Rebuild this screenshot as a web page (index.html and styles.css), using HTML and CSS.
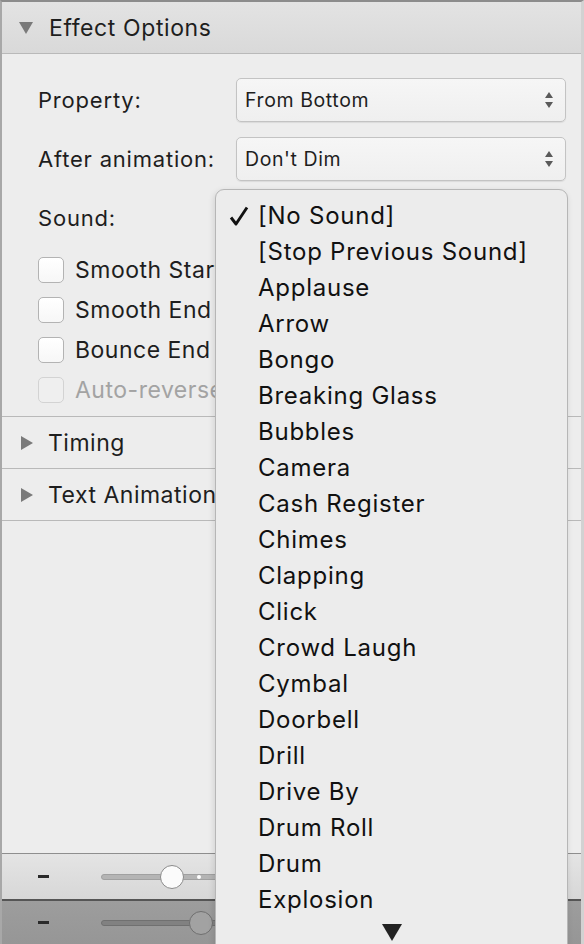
FILE: index.html
```html
<!DOCTYPE html>
<html>
<head>
<meta charset="utf-8">
<link rel="stylesheet" href="styles.css">
</head>
<body>
<div class="panel">
  <div class="section-head open">
    <svg class="tri" width="14" height="12" viewBox="0 0 14 12"><path d="M0 0H14L7 12Z" fill="#7a7a7a"/></svg>
    <span>Effect Options</span>
  </div>
  <div class="options">
    <div class="row">
      <span class="label">Property:</span>
      <div class="select"><span>From Bottom</span>
        <svg class="arrows" width="10" height="20" viewBox="0 0 10 20"><path d="M5 2L9 8H1Z M1 12H9L5 18Z" fill="#5a5a5a"/></svg>
      </div>
    </div>
    <div class="row">
      <span class="label">After animation:</span>
      <div class="select"><span>Don't Dim</span>
        <svg class="arrows" width="10" height="20" viewBox="0 0 10 20"><path d="M5 2L9 8H1Z M1 12H9L5 18Z" fill="#5a5a5a"/></svg>
      </div>
    </div>
    <div class="row sound">
      <span class="label">Sound:</span>
    </div>
    <div class="checks">
      <label class="check"><span class="box"></span>Smooth Start</label>
      <label class="check"><span class="box"></span>Smooth End</label>
      <label class="check"><span class="box"></span>Bounce End</label>
      <label class="check disabled"><span class="box"></span>Auto-reverse</label>
    </div>
  </div>
  <div class="section-head closed">
    <svg class="tri" width="12" height="14" viewBox="0 0 12 14"><path d="M0 0L12 7L0 14Z" fill="#7a7a7a"/></svg>
    <span>Timing</span>
  </div>
  <div class="section-head closed">
    <svg class="tri" width="12" height="14" viewBox="0 0 12 14"><path d="M0 0L12 7L0 14Z" fill="#7a7a7a"/></svg>
    <span>Text Animation</span>
  </div>
  <div class="spacer"></div>
  <div class="bar light">
    <span class="minus"></span>
    <div class="slider"><div class="track"></div><div class="knob" style="left: 59px"></div><div class="dot"></div></div>
  </div>
  <div class="bar dark">
    <span class="minus"></span>
    <div class="slider"><div class="track"></div><div class="knob" style="left: 88px"></div></div>
  </div>

  <div class="menu">
    <ul class="items">
      <li class="checked"><svg class="tick" width="20" height="20" viewBox="0 0 20 20"><path d="M2 11.5L7 18L18 1.5" fill="none" stroke="#111" stroke-width="2.9" stroke-linejoin="round"/></svg>[No Sound]</li>
      <li>[Stop Previous Sound]</li>
      <li>Applause</li>
      <li>Arrow</li>
      <li>Bongo</li>
      <li>Breaking Glass</li>
      <li>Bubbles</li>
      <li>Camera</li>
      <li>Cash Register</li>
      <li>Chimes</li>
      <li>Clapping</li>
      <li>Click</li>
      <li>Crowd Laugh</li>
      <li>Cymbal</li>
      <li>Doorbell</li>
      <li>Drill</li>
      <li>Drive By</li>
      <li>Drum Roll</li>
      <li>Drum</li>
      <li>Explosion</li>
    </ul>
    <div class="more"><svg width="20" height="17" viewBox="0 0 20 17"><path d="M0 0H20L10 17Z" fill="#222"/></svg></div>
  </div>
</div>
</body>
</html>
```

FILE: styles.css
```css
* { box-sizing: border-box; }
html, body { margin: 0; padding: 0; }
body {
  width: 584px;
  height: 944px;
  overflow: hidden;
  font-family: Inter, "Liberation Sans", sans-serif;
  color: #1e1e1e;
  background: #ececec;
}
.panel {
  position: relative;
  width: 584px;
  height: 944px;
  display: flex;
  flex-direction: column;
  border-top: 2px solid #8c8c8c;
  border-left: 2px solid #a8a8a8;
  border-right: 3px solid #d2d2d2;
  background: #ededed;
}
.section-head {
  display: flex;
  align-items: center;
  gap: 16px;
  padding-left: 17px;
  font-size: 23px;
  letter-spacing: 0.6px;
  border-bottom: 1px solid #b9b9b9;
}
.section-head.open {
  height: 52px;
  background: linear-gradient(#e3e3e3, #d9d9d9);
}
.section-head.closed {
  height: 52px;
  padding-left: 19px;
  gap: 15px;
  font-size: 23px;
  letter-spacing: 0.5px;
}
.options {
  padding: 24px 0 6px 36px;
  border-bottom: 1px solid #b9b9b9;
}
.row {
  display: flex;
  align-items: center;
  height: 44px;
  margin-bottom: 15px;
}
.label {
  width: 198px;
  font-size: 22px;
  letter-spacing: 0.8px;
}
.select {
  position: relative;
  width: 330px;
  height: 44px;
  display: flex;
  align-items: center;
  padding-left: 8px;
  font-size: 19.5px;
  letter-spacing: 0.6px;
  border: 1px solid #c3c3c3;
  border-radius: 5px;
  background: linear-gradient(#f6f6f6, #efefef);
  box-shadow: 0 1px 1px rgba(0,0,0,0.08);
}
.arrows {
  position: absolute;
  right: 11px;
  top: 11px;
}
.row.sound { margin-bottom: 10px; }
.checks {
  display: flex;
  flex-direction: column;
}
.check {
  display: flex;
  align-items: center;
  height: 40px;
  gap: 11px;
  font-size: 23px;
  letter-spacing: 0.5px;
}
.box {
  flex: none;
  width: 26px;
  height: 26px;
  border: 1px solid #b3b3b3;
  border-radius: 5px;
  background: linear-gradient(#ffffff, #f7f7f7);
}
.check.disabled { color: #a3a3a3; }
.check.disabled .box { border-color: #d3d3d3; background: #efefef; }
.spacer { flex: 1; }
.bar {
  display: flex;
  align-items: center;
  height: 46px;
  padding-left: 36px;
  gap: 52px;
}
.bar.light {
  border-top: 1px solid #8e8e8e;
  background: linear-gradient(#e4e4e4, #d7d7d7);
}
.bar.dark {
  border-top: 2px solid #555;
  background: linear-gradient(#9d9d9d, #969696);
  height: 45px;
}
.minus {
  width: 11px;
  height: 3px;
  background: #2a2a2a;
}
.slider {
  position: relative;
  width: 160px;
  height: 24px;
}
.track {
  position: absolute;
  left: 0;
  right: 0;
  top: 9px;
  height: 6px;
  border-radius: 3px;
  background: #b4b4b4;
  border: 1px solid #a0a0a0;
}
.dark .track { background: #818181; border-color: #707070; }
.knob {
  position: absolute;
  top: 0;
  width: 24px;
  height: 24px;
  border-radius: 50%;
  background: #fbfbfb;
  border: 1px solid #8a8a8a;
}
.dark .knob { background: #a2a2a2; border-color: #6f6f6f; }
.dot {
  position: absolute;
  left: 96px;
  top: 10px;
  width: 4px;
  height: 4px;
  border-radius: 50%;
  background: #fff;
}
.menu {
  position: absolute;
  left: 213px;
  top: 187px;
  width: 353px;
  height: 780px;
  background: #ececec;
  border: 1px solid #b6b6b6;
  border-radius: 9px 9px 0 0;
  box-shadow: -1px 2px 6px rgba(0,0,0,0.12);
  padding-top: 8px;
}
.items {
  list-style: none;
  margin: 0;
  padding: 0;
}
.items li {
  position: relative;
  height: 36px;
  line-height: 36px;
  padding-left: 42px;
  font-size: 24px;
  letter-spacing: 0.75px;
  color: #111;
}
.tick {
  position: absolute;
  left: 13px;
  top: 8px;
}
.more {
  display: flex;
  justify-content: center;
  padding-top: 6px;
}
```
